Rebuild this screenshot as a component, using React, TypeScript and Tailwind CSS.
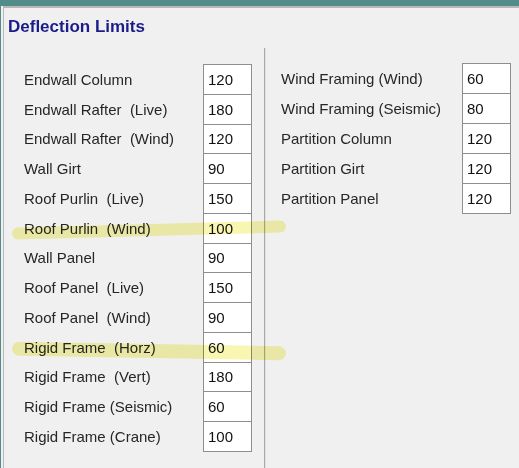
const LEFT_ROWS = [
  { label: "Endwall Column", value: "120" },
  { label: "Endwall Rafter  (Live)", value: "180" },
  { label: "Endwall Rafter  (Wind)", value: "120" },
  { label: "Wall Girt", value: "90" },
  { label: "Roof Purlin  (Live)", value: "150" },
  { label: "Roof Purlin  (Wind)", value: "100" },
  { label: "Wall Panel", value: "90" },
  { label: "Roof Panel  (Live)", value: "150" },
  { label: "Roof Panel  (Wind)", value: "90" },
  { label: "Rigid Frame  (Horz)", value: "60" },
  { label: "Rigid Frame  (Vert)", value: "180" },
  { label: "Rigid Frame (Seismic)", value: "60" },
  { label: "Rigid Frame (Crane)", value: "100" },
];

const RIGHT_ROWS = [
  { label: "Wind Framing (Wind)", value: "60" },
  { label: "Wind Framing (Seismic)", value: "80" },
  { label: "Partition Column", value: "120" },
  { label: "Partition Girt", value: "120" },
  { label: "Partition Panel", value: "120" },
];

function Field({ label, value, labelW, h }: { label: string; value: string; labelW: string; h: string }) {
  return (
    <div className={`flex items-center -mt-px first:mt-0 ${h}`}>
      <span className={`${labelW} whitespace-pre text-[15px] leading-none text-[#262626]`}>{label}</span>
      <div className={`w-[49px] ${h} flex items-center border border-[#8e8e8e] bg-white pl-[4px] text-[15px] leading-none text-[#111]`}>
        {value}
      </div>
    </div>
  );
}

export default function App() {
  return (
    <div
      className="relative w-[519px] h-[468px] overflow-hidden bg-[#f0f0f0] border-t-[6px] border-l border-[#528c8a]"
      style={{ fontFamily: '"Liberation Sans", Arial, sans-serif' }}
    >
      <div className="ml-[2px] h-full border-l border-t-2 border-[#b8b8b8] bg-[#f0f0f0]">
        <div className="pl-[4px] pt-[9px] text-[17px] font-bold leading-[20px] text-[#1b1b8a]">
          Deflection Limits
        </div>

        <div className="mt-[11px] flex h-full">
          <div className="ml-[20px] flex flex-col pt-[16px]">
            {LEFT_ROWS.map((r) => (
              <Field key={r.label} label={r.label} value={r.value} labelW="w-[179px]" h="h-[30.75px]" />
            ))}
          </div>

          <div className="ml-[12px] h-full w-[2px] border-l border-[#a8a8a8] bg-[#e2e2e2]" />

          <div className="ml-[15px] flex flex-col pt-[15px]">
            {RIGHT_ROWS.map((r) => (
              <Field key={r.label} label={r.label} value={r.value} labelW="w-[181px]" h="h-[31px]" />
            ))}
          </div>
        </div>
      </div>

      {/* highlighter marks */}
      <span className="pointer-events-none absolute left-[11px] top-[218px] h-[12px] w-[274px] -rotate-[1.5deg] rounded-full bg-[#f3ef6e] opacity-55 mix-blend-multiply" />
      <span className="pointer-events-none absolute left-[11px] top-[338px] h-[14px] w-[274px] rotate-[1deg] rounded-full bg-[#f3ef6e] opacity-55 mix-blend-multiply" />
    </div>
  );
}
